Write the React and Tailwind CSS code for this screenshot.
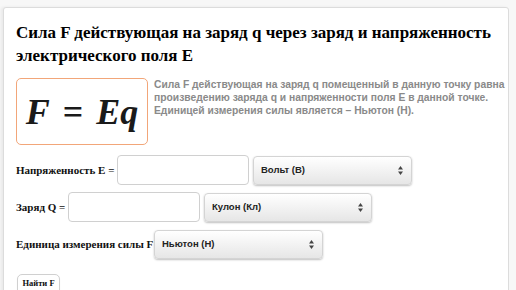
import { useState } from "react";

function FakeSelect({ value, width }) {
  return (
    <div
      className={`${width} h-[29px] flex items-center justify-between pl-[7px] pr-[8px] rounded-[4px] border border-[#d4d4d4] bg-gradient-to-b from-white to-[#e6e6e6] shadow-[0_1px_2px_rgba(0,0,0,0.25)] text-[9.5px] font-bold text-[#222] font-['Liberation_Sans',Arial,sans-serif]`}
    >
      <span>{value}</span>
      <svg width="5" height="9" viewBox="0 0 5 9">
        <path d="M2.5 0 L5 3.5 L0 3.5 Z" fill="#444" />
        <path d="M2.5 9 L5 5.5 L0 5.5 Z" fill="#444" />
      </svg>
    </div>
  );
}

function App() {
  const [e, setE] = useState("");
  const [q, setQ] = useState("");

  return (
    <div className="min-h-screen bg-[#f7f7f7] pl-[3px] pt-[7px] pr-[7px] overflow-hidden">
      <div className="bg-white border border-[#dcdcdc] rounded-tl-[3px] rounded-tr-[3px] shadow-[-2px_0_3px_rgba(0,0,0,0.06)] pl-[12px] pr-[4px] pt-[13px] h-[300px]">
        {/* Title */}
        <h1 className="font-['Liberation_Serif','Times_New_Roman',serif] font-bold text-[17px] leading-[23px] text-black">
          Сила F действующая на заряд q через заряд и напряженность электрического поля E
        </h1>

        {/* Formula + description */}
        <div className="flex gap-[6px] mt-[11px]">
          <div className="w-[132px] h-[67px] shrink-0 border border-[#f2a679] rounded-[5px] flex items-center justify-center font-['Liberation_Serif','Times_New_Roman',serif] text-[#1a1a1a] text-[36px] font-bold italic leading-none">
            <span>F</span>
            <span className="not-italic mx-[13px]">=</span>
            <span>Eq</span>
          </div>
          <p className="font-['Liberation_Sans',Arial,sans-serif] font-bold text-[10.3px] leading-[13px] text-[#8a8a8a] whitespace-nowrap">
            Сила F действующая на заряд q помещенный в данную точку равна<br />
            произведению заряда q и напряженности поля E в данной точке.<br />
            Единицей измерения силы является – Ньютон (Н).
          </p>
        </div>

        {/* Inputs */}
        <div className="font-['Liberation_Serif','Times_New_Roman',serif] font-bold text-[11px] text-[#111]">
          <div className="flex items-center gap-[4px] mt-[10px]">
            <span className="w-[97px] shrink-0 whitespace-nowrap">Напряженность E =</span>
            <input
              value={e}
              onChange={(ev) => setE(ev.target.value)}
              className="w-[132px] h-[30px] rounded-[4px] border border-[#d0d0d0] bg-white outline-none px-2"
            />
            <FakeSelect value="Вольт (В)" width="w-[159px]" />
          </div>
          <div className="flex items-center gap-[4px] mt-[7px]">
            <span className="w-[48px] shrink-0 whitespace-nowrap">Заряд Q =</span>
            <input
              value={q}
              onChange={(ev) => setQ(ev.target.value)}
              className="w-[132px] h-[30px] rounded-[4px] border border-[#d0d0d0] bg-white outline-none px-2"
            />
            <FakeSelect value="Кулон (Кл)" width="w-[168px]" />
          </div>
          <div className="flex items-center gap-[4px] mt-[8px]">
            <span className="w-[134px] shrink-0 whitespace-nowrap">Единица измерения силы F</span>
            <FakeSelect value="Ньютон (Н)" width="w-[169px]" />
          </div>
          <button className="mt-[15px] ml-[1px] w-[43px] h-[26px] rounded-[5px] border border-[#d0d0d0] bg-white text-[8.5px] font-bold leading-none pt-[4px] flex items-start justify-center shadow-[0_1px_1px_rgba(0,0,0,0.1)]">
            Найти F
          </button>
        </div>
      </div>
    </div>
  );
}

export default App;
